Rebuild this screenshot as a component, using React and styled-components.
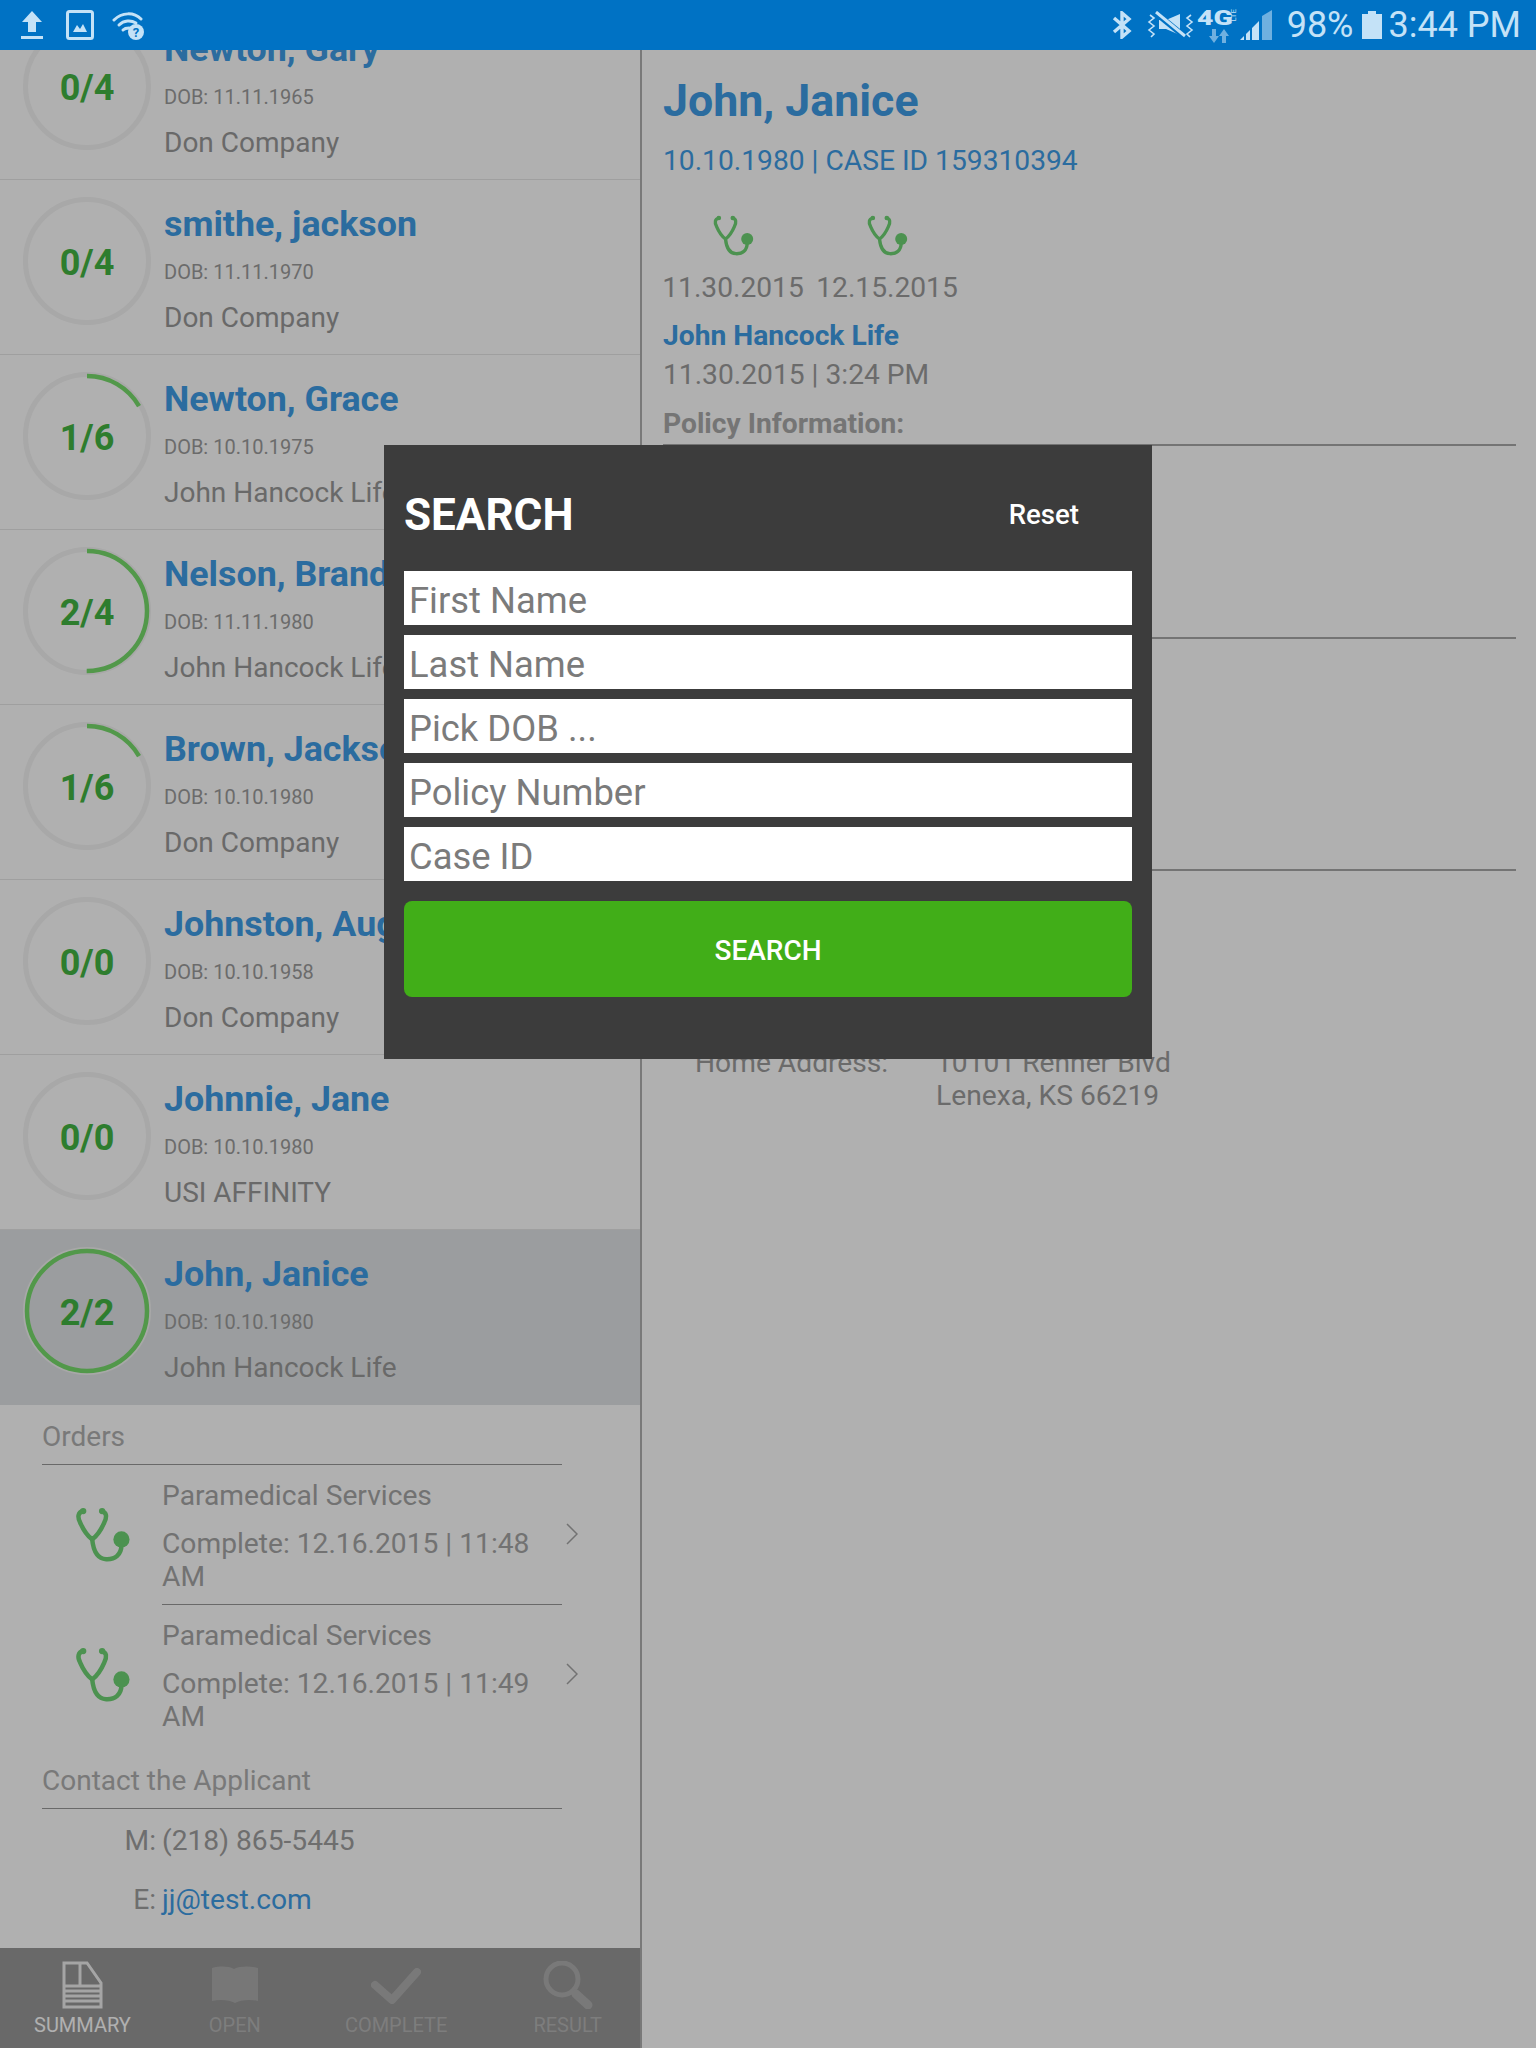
import React from 'react'
import styled, { createGlobalStyle } from 'styled-components'

const GlobalStyle = createGlobalStyle`
  html, body { margin: 0; padding: 0; background: #fff; }
  body { font-family: Roboto, "Liberation Sans", sans-serif; }
  * { box-sizing: border-box; }
`

const applicants = [
  { name: 'Newton, Gary', dob: '11.11.1965', company: 'Don Company', done: 0, total: 4 },
  { name: 'smithe, jackson', dob: '11.11.1970', company: 'Don Company', done: 0, total: 4 },
  { name: 'Newton, Grace', dob: '10.10.1975', company: 'John Hancock Life', done: 1, total: 6 },
  { name: 'Nelson, Brandon', dob: '11.11.1980', company: 'John Hancock Life', done: 2, total: 4 },
  { name: 'Brown, Jackson', dob: '10.10.1980', company: 'Don Company', done: 1, total: 6 },
  { name: 'Johnston, August', dob: '10.10.1958', company: 'Don Company', done: 0, total: 0 },
  { name: 'Johnnie, Jane', dob: '10.10.1980', company: 'USI AFFINITY', done: 0, total: 0 },
  { name: 'John, Janice', dob: '10.10.1980', company: 'John Hancock Life', done: 2, total: 2, selected: true },
]

const orders = ['11:48', '11:49']
const fields = ['First Name', 'Last Name', 'Pick DOB ...', 'Policy Number', 'Case ID']

const Screen = styled.div`
  position: relative;
  width: 1536px;
  height: 2048px;
  overflow: hidden;
  background: #fff;
  display: flex;
  flex-direction: column;
`

const StatusBar = styled.div`
  flex: none;
  position: relative;
  z-index: 3;
  height: 50px;
  background: #0072c4;
  color: #c4e2f7;
  display: flex;
  align-items: center;
  justify-content: space-between;
  padding: 0 15px 0 21px;
`

const StatusGroup = styled.div`
  display: flex;
  align-items: center;
  gap: ${p => p.$gap}px;
`

const StatusText = styled.span`
  font-size: 36px;
  line-height: 50px;
  margin-left: ${p => p.$left || 0}px;
`

const NetBadge = styled.div`
  position: relative;
  width: 38px;
  height: 36px;
  margin-left: -12px;
`

const NetText = styled.span`
  position: absolute;
  left: 0;
  top: -1px;
  font-size: 21px;
  line-height: 24px;
  font-weight: 900;
  transform: scaleX(1.35);
  transform-origin: left center;
`

const LteText = styled.span`
  position: absolute;
  right: -3px;
  top: 2px;
  font-size: 8px;
  line-height: 8px;
  writing-mode: vertical-rl;
  transform: rotate(180deg);
`

const Body = styled.div`
  flex: 1;
  min-height: 0;
  display: flex;
`

const LeftPanel = styled.div`
  flex: none;
  width: 642px;
  border-right: 2px solid #b0b0b0;
  display: flex;
  flex-direction: column;
`

const ListArea = styled.div`
  flex: 1;
  min-height: 0;
  overflow: hidden;
`

const List = styled.div`
  margin-top: -45px;
`

const Row = styled.div`
  height: 175px;
  display: flex;
  gap: 13px;
  padding: 17px 0 0 23px;
  border-bottom: 1px solid ${p => (p.$selected ? '#e1e4e6' : '#e6e6e6')};
  background: ${p => (p.$selected ? '#e1e4e6' : 'transparent')};
`

const RingBox = styled.div`
  flex: none;
  position: relative;
  width: 128px;
  height: 128px;
`

const RingLabel = styled.div`
  position: absolute;
  inset: 0;
  padding-top: 3px;
  display: flex;
  align-items: center;
  justify-content: center;
  font-size: 36px;
  font-weight: 700;
  color: #43b543;
`

const RowInfo = styled.div`
  padding-top: 5px;
  min-width: 0;
  white-space: nowrap;
`

const Name = styled.div`
  font-size: 35.8px;
  line-height: 44px;
  font-weight: 700;
  color: #3f9de6;
`

const Dob = styled.div`
  font-size: 20px;
  line-height: 30px;
  margin-top: 11px;
  color: #9c9c9c;
`

const Company = styled.div`
  font-size: 28px;
  line-height: 36px;
  margin-top: 13px;
  color: #999;
`

const Details = styled.div`
  padding: 15px 78px 0 42px;
`

const DetailTitle = styled.div`
  font-size: 28px;
  line-height: 33px;
  margin-top: ${p => p.$top || 0}px;
  padding-bottom: 11px;
  border-bottom: 1px solid #999;
  color: #b0b0b0;
`

const OrderRow = styled.div`
  display: flex;
  align-items: center;
  margin-right: -16px;
`

const OrderIcon = styled.div`
  flex: none;
  width: 120px;
  padding-left: 32px;
  display: flex;
`

const OrderText = styled.div`
  width: 400px;
  padding: 14px 0 11px;
  border-bottom: 1px solid ${p => (p.$last ? 'transparent' : '#999')};
  font-size: 28.2px;
  line-height: 33px;
  color: #a6a6a6;
`

const OrderLine = styled.div`
  margin-top: ${p => p.$top || 0}px;
`

const Chevron = styled.svg`
  flex: none;
  width: 12px;
  height: 22px;
  margin-left: 4px;
  margin-top: -3px;
`

const ContactRow = styled.div`
  display: flex;
  gap: 6px;
  margin-top: ${p => p.$top}px;
  font-size: 28.2px;
  line-height: 33px;
  color: #a0a0a0;
`

const ContactLabel = styled.span`
  width: 114px;
  text-align: right;
`

const ContactLink = styled.span`
  color: #3f9de6;
`

const TabBar = styled.div`
  flex: none;
  position: relative;
  height: 100px;
  background: #989898;
  display: flex;
  padding: 13px 0 0 34px;
`

const Tab = styled.div`
  position: relative;
  display: flex;
  flex-direction: column;
  align-items: center;
  margin-left: ${p => p.$left || 0}px;
  color: ${p => (p.$active ? '#fff' : '#b6b6b6')};
`

const TabIcon = styled.svg`
  display: block;
  width: 50px;
  height: 48px;
`

const TabLabel = styled.div`
  font-size: 20px;
  line-height: 24px;
  margin-top: 4px;
`

const TabMarker = styled.div`
  position: absolute;
  left: -22px;
  right: -23px;
  bottom: -13px;
  height: 6px;
  background: #2fb32f;
`

const RightPanel = styled.div`
  flex: 1;
  min-width: 0;
  padding: 25px 20px 0 21px;
  font-size: 28.2px;
  line-height: 33px;
  color: #9c9c9c;
`

const Heading = styled.h1`
  margin: 0;
  font-size: 44.7px;
  line-height: 52px;
  font-weight: 700;
  color: #3f9de6;
`

const SubHeading = styled.div`
  margin-top: 17px;
  color: #3f9de6;
`

const Visits = styled.div`
  display: flex;
  gap: 14px;
  margin-top: 38px;
`

const Visit = styled.div`
  width: 140px;
  display: flex;
  flex-direction: column;
  align-items: center;
  gap: 14px;
`

const Carrier = styled.div`
  margin-top: 15px;
  font-weight: 700;
  color: #3f9de6;
`

const CarrierDate = styled.div`
  margin-top: 6px;
`

const SectionTitle = styled.div`
  margin-top: ${p => p.$top}px;
  padding-bottom: 4px;
  font-weight: 700;
  color: #aaa;
  border-bottom: 2px solid #a8a8a8;
`

const AddressRow = styled.div`
  display: flex;
  margin-top: 175px;
  padding-left: 32px;
`

const AddressLabel = styled.div`
  width: 241px;
`

const Scrim = styled.div`
  position: absolute;
  inset: 50px 0 0 0;
  z-index: 1;
  background: rgba(0, 0, 0, 0.31);
`

const Modal = styled.div`
  position: absolute;
  z-index: 2;
  left: 384px;
  top: 445px;
  width: 768px;
  height: 614px;
  background: #3c3c3c;
  padding: 0 20px;
`

const ModalHeader = styled.div`
  height: 126px;
  display: flex;
  align-items: center;
  justify-content: space-between;
  padding: 14px 53px 0 0;
  color: #fff;
`

const ModalTitle = styled.div`
  font-size: 44px;
  font-weight: 700;
`

const ResetLink = styled.div`
  font-size: 27.6px;
  font-weight: 500;
  margin-bottom: 1px;
`

const Fields = styled.div`
  display: flex;
  flex-direction: column;
  gap: 10px;
`

const Field = styled.input`
  display: block;
  width: 100%;
  height: 54px;
  border: none;
  outline: none;
  border-radius: 0;
  background: #fff;
  padding: 5px 5px 0;
  font-family: Roboto, sans-serif;
  font-size: 36.4px;
  &::placeholder { color: #7b7b7b; opacity: 1; }
`

const SearchButton = styled.button`
  display: block;
  width: 100%;
  height: 96px;
  margin-top: 20px;
  padding: 2px 0 0;
  border: none;
  border-radius: 8px;
  background: #41ae18;
  color: #fff;
  font-family: Roboto, sans-serif;
  font-size: 28px;
  font-weight: 500;
`

function Ring({ done, total }) {
  const radius = 60
  const length = 2 * Math.PI * radius
  const share = total ? done / total : 0
  return (
    <RingBox>
      <svg width="128" height="128" viewBox="0 0 128 128">
        <circle cx="64" cy="64" r="61.5" fill="none" stroke="#f3f3f3" strokeWidth="5" />
        {share > 0 && (
          <circle
            cx="64"
            cy="64"
            r={radius}
            fill="none"
            stroke="#78dc6c"
            strokeWidth="4.5"
            strokeDasharray={`${length * share} ${length}`}
            transform="rotate(-90 64 64)"
          />
        )}
      </svg>
      <RingLabel>{done}/{total}</RingLabel>
    </RingBox>
  )
}

function Stethoscope({ size }) {
  return (
    <svg width={size} height={size * 0.97} viewBox="0 0 118 125" fill="none">
      <g stroke="#6fd474" strokeWidth="10" strokeLinecap="round">
        <path d="M15 9C3 12 2 22 8 34C14 48 24 64 35 72C46 64 56 48 62 34C68 22 67 12 57 9" />
        <path d="M35 72C37 92 44 115 66 116C86 117 100 106 100 84" />
      </g>
      <circle cx="15" cy="9" r="7" fill="#6fd474" />
      <circle cx="57" cy="9" r="7" fill="#6fd474" />
      <circle cx="100" cy="72" r="18" fill="#6fd474" />
    </svg>
  )
}

function StatusIcons() {
  return (
    <StatusGroup $gap={23}>
      <svg width="22" height="28" viewBox="0 0 22 28" fill="currentColor">
        <path d="M11 0L21 11H15V21H7V11H1Z" />
        <rect y="25" width="22" height="3" />
      </svg>
      <svg width="28" height="30" viewBox="0 0 28 30">
        <rect x="1.5" y="1.5" width="25" height="27" rx="2" fill="none" stroke="currentColor" strokeWidth="3" />
        <path d="M7 22L11 15L14 19L17 14L21 22Z" fill="currentColor" />
      </svg>
      <svg width="32" height="30" viewBox="0 0 32 30" fill="none" style={{ marginLeft: -5 }}>
        <g stroke="currentColor" strokeWidth="3" strokeLinecap="round">
          <path d="M2 10C10 2 22 2 29 9" />
          <path d="M7 15C12 10 19 10 24 13" />
          <path d="M11 20C13 18 15 18 17 18" />
        </g>
        <circle cx="24" cy="22" r="8" fill="currentColor" />
        <text x="24" y="27" fontSize="13" fontWeight="700" textAnchor="middle" fill="#0072c4">?</text>
      </svg>
    </StatusGroup>
  )
}

function DeviceStatus() {
  return (
    <StatusGroup $gap={15}>
      <svg width="20" height="28" viewBox="0 0 20 28" fill="none" stroke="currentColor" strokeWidth="3.4">
        <path d="M2 7L17 20L10 26V2L17 8L2 21" />
      </svg>
      <svg width="47" height="28" viewBox="0 0 47 28" fill="none" stroke="currentColor">
        <path d="M3 4L7 7L2 11L7 15L2 19L7 23L4 26" strokeWidth="1.6" />
        <path d="M44 4L40 7L45 11L40 15L45 19L40 23L43 26" strokeWidth="1.6" />
        <path d="M33 3V24L19 18H12V9H19Z" fill="currentColor" stroke="none" />
        <path d="M10 3L37 25" stroke="#0072c4" strokeWidth="6" />
        <path d="M9 1L38 25" strokeWidth="3" />
      </svg>
      <NetBadge>
        <NetText>4G</NetText>
        <LteText>LTE</LteText>
        <svg width="24" height="14" viewBox="0 0 24 14" fill="#6fb0e0" style={{ position: 'absolute', left: 11, top: 22 }}>
          <path d="M4 0H8V7H11L6 14L1 7H4Z" />
          <path d="M14 14H18V7H21L16 0L11 7H14Z" />
        </svg>
      </NetBadge>
      <svg width="32" height="30" viewBox="0 0 32 30" style={{ marginLeft: -10 }}>
        <path d="M22 6L32 0V30H22Z" fill="#6fb0e0" />
        <path d="M0 30L4 26V30Z M6 24L10 20V30H6Z M12 18L19 11V30H12Z" fill="currentColor" />
      </svg>
      <StatusText>98%</StatusText>
      <svg width="20" height="28" viewBox="0 0 20 28" fill="currentColor" style={{ marginLeft: -7 }}>
        <path d="M6 0H14V3H20V28H0V3H6Z" />
      </svg>
      <StatusText $left={-8}>3:44 PM</StatusText>
    </StatusGroup>
  )
}

function TabGlyph({ name }) {
  if (name === 'summary') {
    return (
      <TabIcon viewBox="0 0 50 48" fill="none" stroke="currentColor" strokeWidth="3" opacity="0.85">
        <path d="M7 25V2H30L44 22V46H7V25H44" />
        <path d="M23 2V24" />
        <path d="M7 30H44M7 35H44M7 40H44" />
      </TabIcon>
    )
  }
  if (name === 'open') {
    return (
      <TabIcon viewBox="0 0 50 48">
        <path d="M2 7C10 5 18 5 24 8C30 5 40 5 48 7V40C40 38 30 39 25 42C20 39 10 38 2 40Z" fill="currentColor" opacity="0.72" />
      </TabIcon>
    )
  }
  if (name === 'complete') {
    return (
      <TabIcon viewBox="0 0 50 48" fill="none" stroke="currentColor" strokeWidth="8" strokeLinecap="round" strokeLinejoin="round" opacity="0.8">
        <path d="M4 24L21 39L46 11" />
      </TabIcon>
    )
  }
  return (
    <TabIcon viewBox="0 0 50 48" fill="none" stroke="currentColor" strokeLinecap="round" opacity="0.8">
      <circle cx="19" cy="18" r="16" strokeWidth="5" />
      <path d="M33 33L45 44" strokeWidth="9" />
    </TabIcon>
  )
}

export default function App() {
  return (
    <Screen>
      <GlobalStyle />
      <StatusBar>
        <StatusIcons />
        <DeviceStatus />
      </StatusBar>

      <Body>
        <LeftPanel>
          <ListArea>
            <List>
              {applicants.map(a => (
                <Row key={a.name} $selected={a.selected}>
                  <Ring done={a.done} total={a.total} />
                  <RowInfo>
                    <Name>{a.name}</Name>
                    <Dob>DOB: {a.dob}</Dob>
                    <Company>{a.company}</Company>
                  </RowInfo>
                </Row>
              ))}
            </List>
            <Details>
              <DetailTitle>Orders</DetailTitle>
              {orders.map((time, i) => (
                <OrderRow key={time}>
                  <OrderIcon><Stethoscope size={58} /></OrderIcon>
                  <OrderText $last={i === orders.length - 1}>
                    <OrderLine>Paramedical Services</OrderLine>
                    <OrderLine $top={15}>Complete: 12.16.2015 | {time} AM</OrderLine>
                  </OrderText>
                  <Chevron viewBox="0 0 12 22" fill="none" stroke="#a6a6a6" strokeWidth="1.5">
                    <path d="M1 1L11 11L1 21" />
                  </Chevron>
                </OrderRow>
              ))}
              <DetailTitle $top={19}>Contact the Applicant</DetailTitle>
              <ContactRow $top={15}>
                <ContactLabel>M:</ContactLabel>
                <span>(218) 865-5445</span>
              </ContactRow>
              <ContactRow $top={26}>
                <ContactLabel>E:</ContactLabel>
                <ContactLink>jj@test.com</ContactLink>
              </ContactRow>
            </Details>
          </ListArea>

          <TabBar>
            <Tab $active>
              <TabGlyph name="summary" />
              <TabLabel>SUMMARY</TabLabel>
              <TabMarker />
            </Tab>
            <Tab $left={78}>
              <TabGlyph name="open" />
              <TabLabel>OPEN</TabLabel>
            </Tab>
            <Tab $left={84}>
              <TabGlyph name="complete" />
              <TabLabel>COMPLETE</TabLabel>
            </Tab>
            <Tab $left={86}>
              <TabGlyph name="result" />
              <TabLabel>RESULT</TabLabel>
            </Tab>
          </TabBar>
        </LeftPanel>

        <RightPanel>
          <Heading>John, Janice</Heading>
          <SubHeading>10.10.1980 | CASE ID 159310394</SubHeading>
          <Visits>
            <Visit><Stethoscope size={43} />11.30.2015</Visit>
            <Visit><Stethoscope size={43} />12.15.2015</Visit>
          </Visits>
          <Carrier>John Hancock Life</Carrier>
          <CarrierDate>11.30.2015 | 3:24 PM</CarrierDate>
          <SectionTitle $top={16}>Policy Information:</SectionTitle>
          <SectionTitle $top={154}>Exam Information:</SectionTitle>
          <SectionTitle $top={193}>Applicant Information:</SectionTitle>
          <AddressRow>
            <AddressLabel>Home Address:</AddressLabel>
            <div>
              10101 Renner Blvd
              <br />
              Lenexa, KS 66219
            </div>
          </AddressRow>
        </RightPanel>
      </Body>

      <Scrim />
      <Modal>
        <ModalHeader>
          <ModalTitle>SEARCH</ModalTitle>
          <ResetLink>Reset</ResetLink>
        </ModalHeader>
        <Fields>
          {fields.map(f => <Field key={f} placeholder={f} readOnly />)}
        </Fields>
        <SearchButton>SEARCH</SearchButton>
      </Modal>
    </Screen>
  )
}
